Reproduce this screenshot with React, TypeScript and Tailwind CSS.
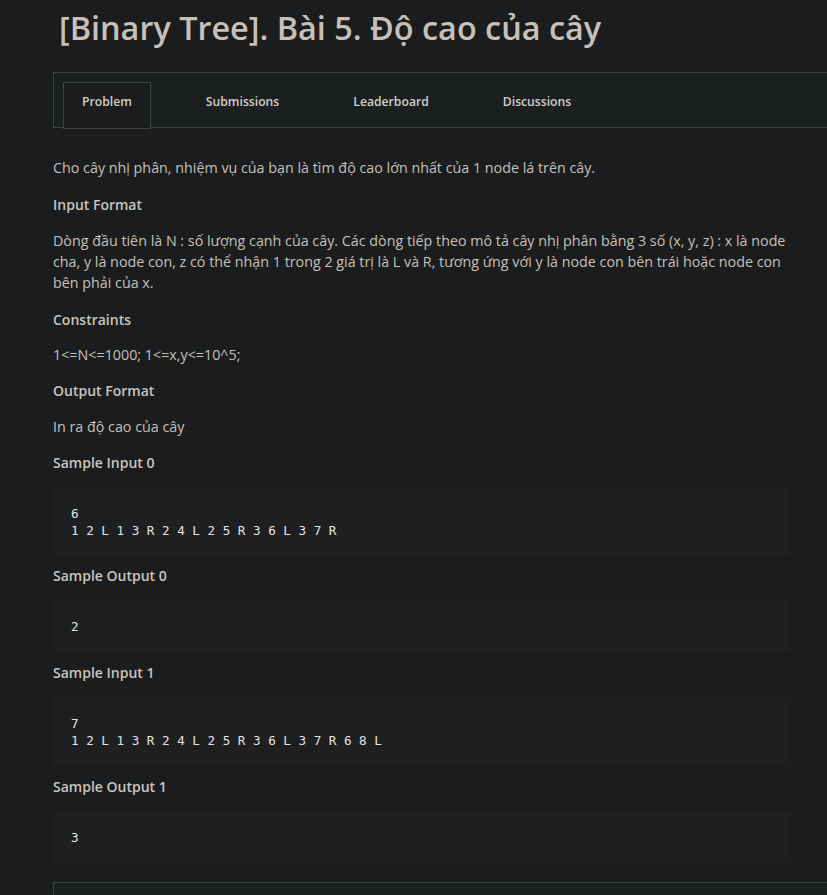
import React from "react";

const font = { fontFamily: '"Open Sans", "Noto Sans", sans-serif' };

function Code({ lines }: { lines: string[] }) {
  return (
    <pre className="bg-[#1e1f21] pl-[18px] pt-[18px] pb-[17px] text-[12.6px] leading-[17px] text-[#e6e4e1] font-['DejaVu_Sans_Mono',monospace] m-0">
      {lines.join("\n")}
    </pre>
  );
}

export default function App() {
  const tabs = ["Problem", "Submissions", "Leaderboard", "Discussions"];
  const h = "font-semibold text-[14px] text-[#c9c4bd]";
  return (
    <div
      className="w-[827px] h-[895px] overflow-hidden bg-[#1b1c1e] text-[#c6c0b8]"
      style={font}
    >
      <h1 className="pl-[59px] pt-[6px] text-[32.4px] leading-[42px] font-semibold text-[#c6c0b8] m-0">
        [Binary Tree]. Bài 5. Độ cao của cây
      </h1>
      <div className="ml-[53px] mt-[24px] w-[900px] h-[56px] border border-[#3d4144] bg-[#1c1f20] pl-[9px] pt-[9px]">
        <div className="flex gap-9 items-start">
          {tabs.map((t, i) => (
            <div
              key={t}
              className={
                "h-[47px] px-[18px] pt-[10px] text-[12.2px] leading-[17px] font-semibold text-[#d2cec8] border " +
                (i === 0 ? "border-[#3d4144] bg-[#1b1c1e]" : "border-transparent")
              }
            >
              {t}
            </div>
          ))}
        </div>
      </div>
      <div className="ml-[53px] w-[745px] pt-[29px] text-[14.3px] leading-[21px]">
        <p className="mb-[16px]">
          Cho cây nhị phân, nhiệm vụ của bạn là tìm độ cao lớn nhất của 1 node lá trên cây.
        </p>
        <h3 className={h + " mb-[15px]"}>Input Format</h3>
        <p className="mb-[16px]">
          Dòng đầu tiên là N : số lượng cạnh của cây. Các dòng tiếp theo mô tả cây nhị phân bằng 3 số (x, y, z) : x là node cha, y là node con, z có thể nhận 1 trong 2 giá trị là L và R, tương ứng với y là node con bên trái hoặc node con bên phải của x.
        </p>
        <h3 className={h + " mb-[14px]"}>Constraints</h3>
        <p className="mb-[15px]">1&lt;=N&lt;=1000; 1&lt;=x,y&lt;=10^5;</p>
        <h3 className={h + " mb-[15px]"}>Output Format</h3>
        <p className="mb-[15px]">In ra độ cao của cây</p>
        <h3 className={h + " mb-[14px]"}>Sample Input 0</h3>
        <div className="w-[737px]">
          <Code lines={["6", "1 2 L 1 3 R 2 4 L 2 5 R 3 6 L 3 7 R"]} />
        </div>
        <h3 className={h + " mt-[9px] mb-[14px]"}>Sample Output 0</h3>
        <div className="w-[737px]">
          <Code lines={["2"]} />
        </div>
        <h3 className={h + " mt-[10px] mb-[14px]"}>Sample Input 1</h3>
        <div className="w-[737px]">
          <Code lines={["7", "1 2 L 1 3 R 2 4 L 2 5 R 3 6 L 3 7 R 6 8 L"]} />
        </div>
        <h3 className={h + " mt-[10px] mb-[14px]"}>Sample Output 1</h3>
        <div className="w-[737px]">
          <Code lines={["3"]} />
        </div>
      </div>
      <div className="ml-[53px] mt-[19px] w-[900px] h-[60px] border border-[#3d4144] bg-[#1c1f20]" />
    </div>
  );
}
